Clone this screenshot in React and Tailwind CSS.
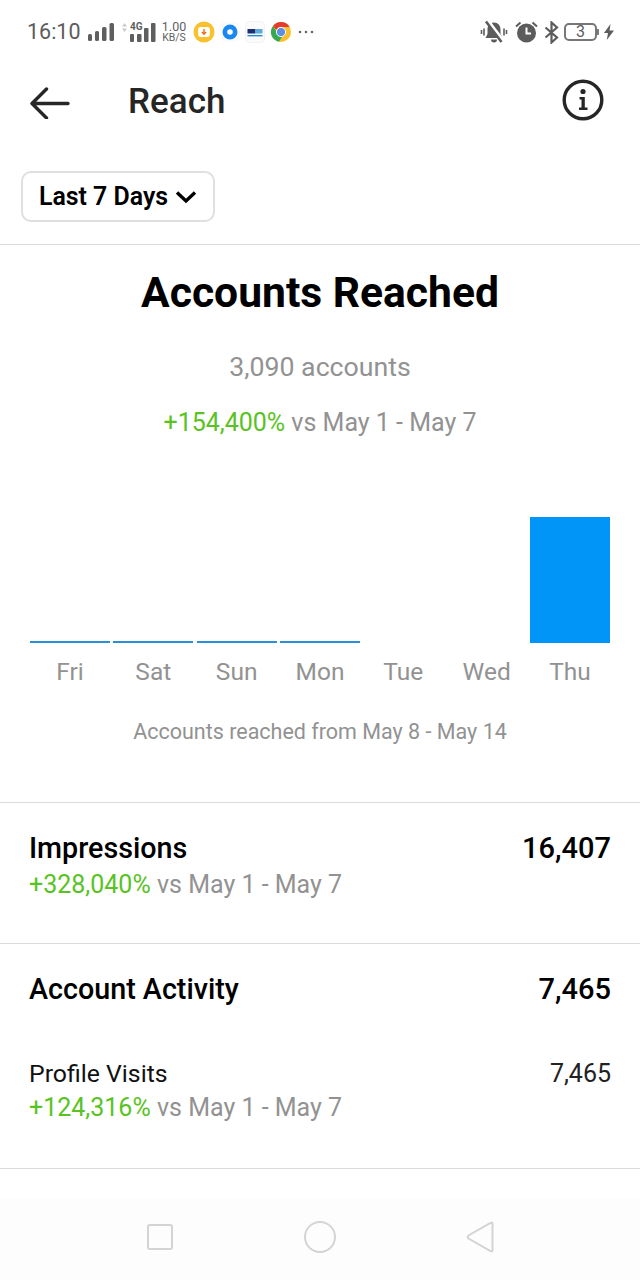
import React from "react";

function StatusLeft() {
  return (
    <div className="flex items-center">
      <span className="text-[21.500px] leading-none text-[#5c5c5c] ml-[27px] w-[61px]">16:10</span>
      <svg width="26" height="18" viewBox="0 0 26 18" className="shrink-0">
        <g fill="#5f5f5f">
          <rect x="0" y="11" width="4" height="7" rx="1.500" />
          <rect x="7" y="8" width="4" height="10" rx="1.500" />
          <rect x="14" y="4" width="4.500" height="14" rx="1.500" />
          <rect x="21.500" y="0" width="4.500" height="18" rx="1.500" />
        </g>
      </svg>
      <div className="relative ml-[16px] w-[26px] h-[19px]">
        <svg width="5" height="9" viewBox="0 0 5 9" className="absolute left-[-8px] top-[0px]">
          <path d="M2.500 0 L5 3.500 H0 Z M2.500 9 L5 5.500 H0 Z" fill="#c9c9c9" />
        </svg>
        <span className="absolute left-0 top-[-1px] text-[10px] font-bold leading-none text-[#5f5f5f]">4G</span>
        <svg width="26" height="19" viewBox="0 0 26 19" className="absolute left-0 bottom-0">
          <g fill="#5f5f5f">
            <rect x="0" y="11" width="4" height="8" rx="1" />
            <rect x="7" y="11" width="4.500" height="8" rx="1" />
            <rect x="14" y="5" width="4.500" height="14" rx="1" />
            <rect x="21" y="0" width="4.500" height="19" rx="1" />
          </g>
        </svg>
      </div>
      <div className="flex flex-col items-center w-[24px] ml-[6px] text-[#5f5f5f]">
        <span className="text-[12.500px] leading-[12px]">1.00</span>
        <span className="text-[10.500px] leading-[10px]">KB/S</span>
      </div>
      <svg width="22" height="22" viewBox="0 0 22 22" className="ml-[7px] shrink-0">
        <circle cx="11" cy="11" r="10.500" fill="#fbc02d" />
        <path d="M5 9a3 3 0 0 1 3-3h6a3 3 0 0 1 3 3v2a1.500 1.500 0 0 0 0 2a3 3 0 0 1-3 3H8a3 3 0 0 1-3-3a1.500 1.500 0 0 0 0-2z" fill="#fff" />
        <path d="M11 8v5M8.800 11l2.200 2.200 2.200-2.200" stroke="#e8711a" strokeWidth="1.400" fill="none" />
      </svg>
      <svg width="22" height="22" viewBox="0 0 22 22" className="ml-[4px] shrink-0">
        <rect x="1" y="1" width="20" height="20" rx="5" fill="#fbfbfb" />
        <circle cx="11" cy="11" r="7.500" fill="#1b87f3" />
        <circle cx="11" cy="11" r="2.800" fill="#fff" />
      </svg>
      <svg width="20" height="22" viewBox="0 0 20 22" className="ml-[4px] shrink-0">
        <rect x="0.500" y="0.500" width="19" height="21" rx="4" fill="#fbfbfb" stroke="#f2f2f2" />
        <rect x="2.500" y="8" width="8" height="4.500" fill="#1a2f6b" />
        <rect x="10.500" y="8" width="7" height="4.500" fill="#5fa8dc" />
        <rect x="2.500" y="14" width="15" height="1.400" fill="#1f8fd6" />
      </svg>
      <svg width="22" height="22" viewBox="0 0 22 22" className="ml-[5px] shrink-0">
        <circle cx="11" cy="11" r="10" fill="#fbc02d" />
        <path d="M11 1a10 10 0 0 1 8.660 5H11a5 5 0 0 0-4.600 3L3 4.900A10 10 0 0 1 11 1z" fill="#e33b2e" />
        <path d="M3 4.900l4 6.600a4.500 4.500 0 0 0 5.500 3.600L9 20.800A10 10 0 0 1 3 4.900z" fill="#34a853" />
        <circle cx="11" cy="11" r="4.600" fill="#5c8ee6" stroke="#fff" strokeWidth="1" />
      </svg>
      <svg width="16" height="4" viewBox="0 0 16 4" className="ml-[6px] shrink-0">
        <g fill="#666">
          <circle cx="2" cy="2" r="1.300" />
          <circle cx="8" cy="2" r="1.300" />
          <circle cx="14" cy="2" r="1.300" />
        </g>
      </svg>
    </div>
  );
}

function StatusRight() {
  return (
    <div className="flex items-center mr-[26px]">
      <svg width="28" height="24" viewBox="0 0 28 24" className="shrink-0">
        <path d="M14 2.500c-4 0-6.500 3-6.500 7v4.500L5.500 18h17l-2-4V9.500c0-4-2.500-7-6.500-7zM11 19.500a3 3 0 0 0 6 0z" fill="#5c5c5c" />
        <path d="M8 0.500 L23 20.500" stroke="#fff" strokeWidth="3" />
        <path d="M6 1.500 L21.500 22" stroke="#5c5c5c" strokeWidth="2.600" />
        <path d="M1.500 10v4M4 8.500v7M24 8.500v7M26.500 10v4" stroke="#5c5c5c" strokeWidth="1.600" />
      </svg>
      <svg width="23" height="24" viewBox="0 0 23 24" className="ml-[7px] shrink-0">
        <circle cx="11.500" cy="13" r="9.500" fill="#5c5c5c" />
        <path d="M11.500 7.500V13.500H16" stroke="#fff" strokeWidth="2" fill="none" />
        <path d="M1 6.500 L5.500 2.500M22 6.500 L17.500 2.500" stroke="#5c5c5c" strokeWidth="2" />
      </svg>
      <svg width="15" height="23" viewBox="0 0 15 23" className="ml-[6px] shrink-0">
        <path d="M1.500 6.500 L13 16.500 L7.500 21.500V1.500L13 6.500L1.500 16.500" stroke="#5c5c5c" strokeWidth="2.200" fill="none" />
      </svg>
      <div className="ml-[5px] flex items-center">
        <div className="w-[33px] h-[18px] rounded-[5px] border-2 border-[#777] flex items-center justify-center text-[16px] leading-none text-[#5c5c5c]">3</div>
        <div className="w-[2px] h-[6px] bg-[#777] rounded-r-[1px]" />
      </div>
      <svg width="10" height="16" viewBox="0 0 10 16" className="ml-[5px] shrink-0">
        <path d="M6.500 0 L0 9h4L2.800 16 L10 6.500H5.500z" fill="#5c5c5c" />
      </svg>
    </div>
  );
}

function Green({ v }) {
  return (
    <p className="text-[25px] leading-[28px] text-[#929292]">
      <span className="text-[#58c322]">{v}</span> vs May 1 - May 7
    </p>
  );
}

const days = [
  ["Fri", 2],
  ["Sat", 2],
  ["Sun", 2],
  ["Mon", 2],
  ["Tue", 0],
  ["Wed", 0],
  ["Thu", 126],
];

export default function App() {
  return (
    <div className="w-[640px] h-[1280px] bg-white flex flex-col overflow-hidden" style={{ fontFamily: "Roboto, sans-serif" }}>
      <div className="h-[64px] flex items-center justify-between shrink-0">
        <StatusLeft />
        <StatusRight />
      </div>
      <div className="h-[80px] flex items-center shrink-0 pl-[29px] pr-[36px] mt-[-3px]">
        <svg width="41" height="32" viewBox="0 0 41 32" className="shrink-0 mt-[4px]">
          <path d="M39 16.500H3M17.500 2 L3 16.500 L17.500 31" stroke="#262626" strokeWidth="3.400" fill="none" strokeLinecap="round" strokeLinejoin="round" />
        </svg>
        <h1 className="ml-[58px] text-[35px] leading-none font-medium text-[#262626]">Reach</h1>
        <svg width="42" height="42" viewBox="0 0 42 42" className="ml-auto shrink-0 mb-[2px]">
          <circle cx="21" cy="21" r="18.800" stroke="#262626" strokeWidth="3.400" fill="none" />
          <circle cx="21" cy="12.500" r="2.600" fill="#262626" />
          <path d="M17.500 18H22.800V28.500H25.500V31H17V28.500H19.500V20.500H17.500z" fill="#262626" />
        </svg>
      </div>
      <div className="pl-[21px] pt-[30px] shrink-0 h-[104px] border-b border-[#dbdbdb]">
        <button className="h-[51px] w-[194px] pt-[1px] rounded-[10px] border-2 border-[#dfdfdf] flex items-center justify-center gap-[7px] text-[24.900px] font-semibold text-black">
          Last 7 Days
          <svg width="22" height="14" viewBox="0 0 22 14" className="shrink-0">
            <path d="M2 2.500 L11 11 L20 2.500" stroke="#000" strokeWidth="3.400" fill="none" />
          </svg>
        </button>
      </div>

      <div className="h-[558px] shrink-0 border-b border-[#dbdbdb] flex flex-col items-center">
        <h2 className="mt-[21px] text-[42.600px] leading-[52px] font-bold text-black">Accounts Reached</h2>
        <p className="mt-[33px] text-[26.700px] leading-[32px] text-[#929292]">3,090 accounts</p>
        <div className="mt-[26px]">
          <Green v="+154,400%" />
        </div>
        <div className="w-[580px] h-[206px] grid grid-cols-7 gap-x-[3.500px] items-end shrink-0">
          {days.map(([d, h]) => (
            <div key={d} className="flex flex-col justify-end h-full">
              {h > 0 && (
                <div
                  className={h > 2 ? "bg-[#0095f6]" : "bg-[#2a8fd8]"}
                  style={{ height: h }}
                />
              )}
            </div>
          ))}
        </div>
        <div className="w-[580px] grid grid-cols-7 gap-x-[3.500px] mt-[14px]">
          {days.map(([d]) => (
            <span key={d} className="text-center text-[24.500px] leading-[30px] text-[#929292]">{d}</span>
          ))}
        </div>
        <p className="mt-[32px] text-[21.500px] leading-[26px] text-[#929292]">Accounts reached from May 8 - May 14</p>
      </div>

      <div className="h-[141px] shrink-0 border-b border-[#dbdbdb] px-[29px] pt-[28px]">
        <div className="flex justify-between items-start">
          <span className="text-[28.700px] leading-[34px] font-medium text-black">Impressions</span>
          <span className="text-[29px] leading-[34px] font-medium text-black">16,407</span>
        </div>
        <div className="mt-[6px]">
          <Green v="+328,040%" />
        </div>
      </div>

      <div className="h-[225px] shrink-0 border-b border-[#dbdbdb] px-[29px] pt-[28px]">
        <div className="flex justify-between items-start">
          <span className="text-[28.700px] leading-[34px] font-medium text-black">Account Activity</span>
          <span className="text-[29px] leading-[34px] font-medium text-black">7,465</span>
        </div>
        <div className="flex justify-between items-start mt-[53px]">
          <span className="text-[24.800px] leading-[30px] text-[#111]">Profile Visits</span>
          <span className="text-[25px] leading-[30px] text-[#222]">7,465</span>
        </div>
        <div className="mt-[5px]">
          <Green v="+124,316%" />
        </div>
      </div>

      <div className="flex-1 bg-[#fdfdfd] mt-[29px] pt-[19px]">
        <div className="h-[40px] flex items-center justify-between pl-[147px] pr-[146px]">
          <div className="w-[26px] h-[26px] rounded-[3px] border-2 border-[#d4d4d4]" />
          <div className="w-[32px] h-[32px] rounded-full border-2 border-[#d4d4d4]" />
          <svg width="28" height="32" viewBox="0 0 28 32">
            <path d="M26.500 3 V29 Q26.500 31 24.500 30 L2.500 17.500 Q1 16 2.500 14.500 L24.500 2 Q26.500 1 26.500 3z" stroke="#d4d4d4" strokeWidth="2" fill="none" />
          </svg>
        </div>
      </div>
    </div>
  );
}
